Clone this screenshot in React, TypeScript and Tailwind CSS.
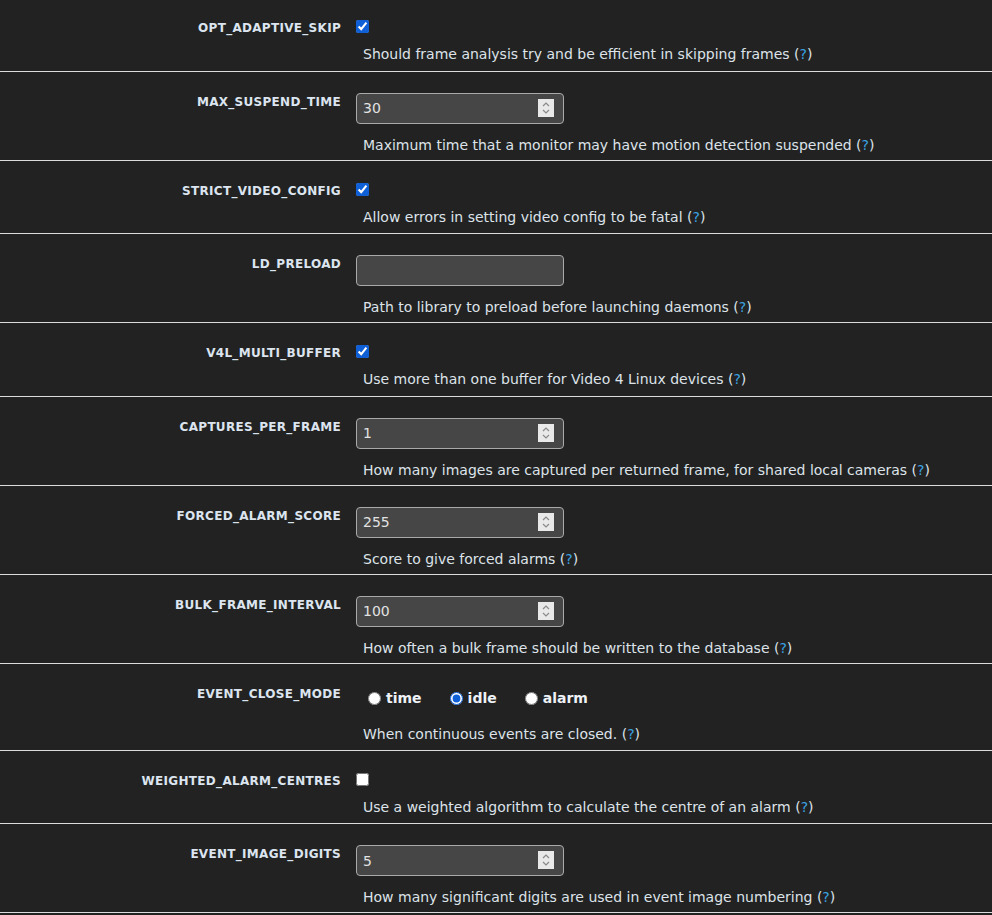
import React from 'react';

type Row =
  | { name: string; kind: 'check'; checked: boolean; help: string }
  | { name: string; kind: 'number' | 'text'; value: string; help: string }
  | { name: string; kind: 'radio'; options: string[]; selected: string; help: string };

const rows: Row[] = [
  { name: 'OPT_ADAPTIVE_SKIP', kind: 'check', checked: true, help: 'Should frame analysis try and be efficient in skipping frames' },
  { name: 'MAX_SUSPEND_TIME', kind: 'number', value: '30', help: 'Maximum time that a monitor may have motion detection suspended' },
  { name: 'STRICT_VIDEO_CONFIG', kind: 'check', checked: true, help: 'Allow errors in setting video config to be fatal' },
  { name: 'LD_PRELOAD', kind: 'text', value: '', help: 'Path to library to preload before launching daemons' },
  { name: 'V4L_MULTI_BUFFER', kind: 'check', checked: true, help: 'Use more than one buffer for Video 4 Linux devices' },
  { name: 'CAPTURES_PER_FRAME', kind: 'number', value: '1', help: 'How many images are captured per returned frame, for shared local cameras' },
  { name: 'FORCED_ALARM_SCORE', kind: 'number', value: '255', help: 'Score to give forced alarms' },
  { name: 'BULK_FRAME_INTERVAL', kind: 'number', value: '100', help: 'How often a bulk frame should be written to the database' },
  { name: 'EVENT_CLOSE_MODE', kind: 'radio', options: ['time', 'idle', 'alarm'], selected: 'idle', help: 'When continuous events are closed.' },
  { name: 'WEIGHTED_ALARM_CENTRES', kind: 'check', checked: false, help: 'Use a weighted algorithm to calculate the centre of an alarm' },
  { name: 'EVENT_IMAGE_DIGITS', kind: 'number', value: '5', help: 'How many significant digits are used in event image numbering' },
];

function Spinner() {
  return (
    <div className="absolute right-[10px] top-[6px] flex h-[18px] w-[16px] items-center justify-center bg-[#e9e9e9]">
      <svg width="10" height="14" viewBox="0 0 10 14" fill="none" stroke="#8a8a8a" strokeWidth="1.2">
        <path d="M2 5 L5 2 L8 5" />
        <path d="M2 9 L5 12 L8 9" />
      </svg>
    </div>
  );
}

function Control({ row }: { row: Row }) {
  if (row.kind === 'check') {
    return (
      <div className="h-[14px] pt-[1px]">
        <input type="checkbox" defaultChecked={row.checked} className="m-0 block h-[13px] w-[13px] accent-[#0f5fd6]" />
      </div>
    );
  }
  if (row.kind === 'radio') {
    return (
      <div className="mt-[1px] flex h-[26px] items-center pl-[12px]">
        {row.options.map((o) => (
          <label key={o} className="mr-[28px] flex items-center text-[14px] font-bold text-[#eef2f6]">
            <input type="radio" name={row.name} defaultChecked={o === row.selected} className="m-0 mr-[5px] h-[13px] w-[13px] accent-[#0f5fd6]" />
            {o}
          </label>
        ))}
      </div>
    );
  }
  return (
    <div className="relative h-[31px] w-[208px]">
      <input
        type="text"
        defaultValue={row.value}
        className="h-full w-full rounded-[4px] border border-[#a9a9a9] bg-[#464646] pl-[6px] text-[14px] text-[#e2e2e2] outline-none"
      />
      {row.kind === 'number' && <Spinner />}
    </div>
  );
}

export default function App() {
  return (
    <div className="min-h-[915px] overflow-hidden bg-[#222222] font-['DejaVu_Sans',Verdana,sans-serif]">
      <div className="-mt-[2px]">
        {rows.map((row) => (
          <div
            key={row.name}
            className={`flex border-b border-[#dcdcdc] pt-[21px] ${
              row.kind === 'check' ? 'pb-[6.5px]' : row.kind === 'radio' ? 'pb-[6px]' : 'pb-[5px]'
            }`}
          >
            <div className="mt-[1px] w-[341px] shrink-0 text-right text-[12px] font-bold leading-[16px] tracking-[0.3px] text-[#dce5ef]">
              {row.name}
            </div>
            <div className="ml-[15px] flex flex-col">
              <Control row={row} />
              <div className={`${row.kind === 'radio' ? 'mt-[12px]' : 'mt-[11px]'} pl-[7px] text-[14px] leading-[20px] text-[#dde3e9]`}>
                {row.help} (<span className="text-[#3aa3e3]">?</span>)
              </div>
            </div>
          </div>
        ))}
      </div>
    </div>
  );
}
